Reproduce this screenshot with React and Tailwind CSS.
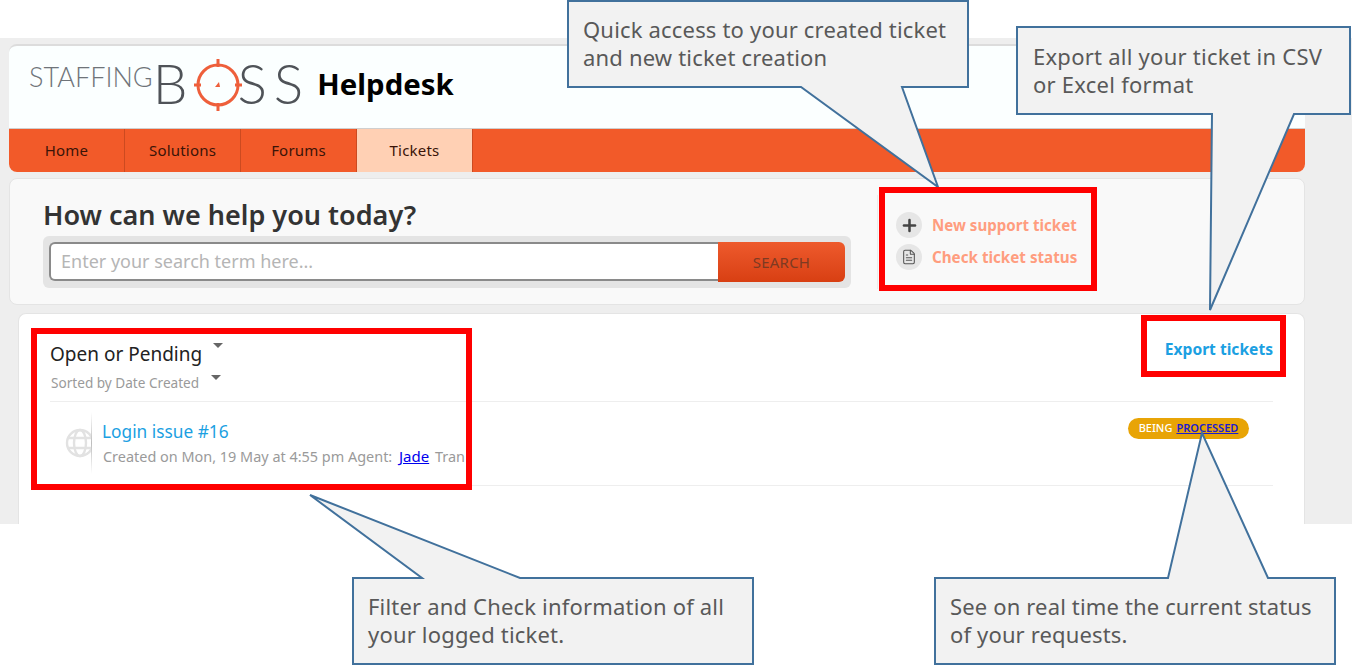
import { Plus, FileText } from 'lucide-react';

const navItems = ['Home', 'Solutions', 'Forums', 'Tickets'];

const callouts = [
  { d: 'M568 1H968V87H902L938 187L801 87H568Z' },
  { d: 'M1017 27H1350V114H1294L1210 310L1212 114H1017Z' },
  { d: 'M353 578H422L310 495L520 578H753V664H353Z' },
  { d: 'M935 578H1168L1202 433L1268 578H1335V664H935Z' },
];

const Caret = () => (
  <span className="block w-0 h-0 border-x-[5px] border-x-transparent border-t-[5px] border-t-[#666]" />
);

const TargetLogo = () => (
  <svg width="56" height="56" viewBox="0 0 56 56" className="shrink-0">
    <circle cx="28" cy="28" r="20" fill="none" stroke="#ee5f3b" strokeWidth="3" />
    <path d="M28 2v8M28 46v8M4 28h7M45 28h7" stroke="#ee5f3b" strokeWidth="3" />
    <path d="M25 30l4-5 1 5z" fill="#ee5f3b" />
  </svg>
);

const Globe = () => (
  <svg width="28" height="30" viewBox="0 0 28 30" fill="none" stroke="#e2e2e2" strokeWidth="2.4" className="shrink-0">
    <circle cx="15" cy="15" r="13" />
    <ellipse cx="15" cy="15" rx="6" ry="13" />
    <path d="M2 10h26M2 20h26" />
  </svg>
);

export default function App() {
  return (
    <div className="relative w-[1352px] h-[665px] bg-white overflow-hidden font-['Noto_Sans',sans-serif]">
      <div className="mt-[38px] h-[486px] w-full absolute top-0 left-0 bg-[#eeeeee]" />

      <div className="relative pt-[44px] pl-[9px] w-[1305px] flex flex-col">
        {/* Header */}
        <div className="h-[128px] rounded-lg border-t-2 border-[#dcdcdc] bg-[#fbffff] flex flex-col">
          <div className="h-[82px] flex items-start pl-[20px]">
            <span className="font-['Lato',sans-serif] font-light text-[27px] leading-none text-[#6f7479] mt-[17px]">STAFFING</span>
            <span className="font-['Lato',sans-serif] font-light text-[55px] leading-none text-[#4f5358] mt-[10px]">B</span>
            <span className="ml-[3px] mt-[11px]"><TargetLogo /></span>
            <span className="font-['Lato',sans-serif] font-light text-[55px] leading-none text-[#4f5358] tracking-[7px] mt-[10px] -ml-[9px]">SS</span>
            <span className="font-bold text-[29.4px] leading-none text-black ml-[7px] mt-[24px]">Helpdesk</span>
          </div>
          <div className="h-[44px] bg-[#f25a29] rounded-b-lg border-t border-[#cfcfcf] flex">
            {navItems.map((item) => (
              <div
                key={item}
                className={`w-[116px] flex items-center justify-center text-[15px] tracking-[0.2px] pb-[1px] border-r border-[#cc4a20] text-[#3a1408] ${item === 'Tickets' ? 'bg-[#ffd0b4]' : ''}`}
              >
                {item}
              </div>
            ))}
          </div>
        </div>

        {/* Search */}
        <div className="mt-[6px] h-[127px] bg-[#f9f9f9] rounded-lg border border-[#e4e4e4] flex">
          <div className="pl-[33px] pt-[18px] w-[867px]">
            <h1 className="font-semibold text-[27px] leading-[36px] text-[#333]">How can we help you today?</h1>
            <div className="mt-[3px] w-[808px] h-[52px] bg-[#e4e4e4] rounded-md p-[6px] flex">
              <div className="w-[669px] h-[39px] bg-white border-2 border-r-0 border-[#8a8a8a] rounded-l-md flex items-center pl-[10px] text-[18px] text-[#b5b5b5]">
                Enter your search term here...
              </div>
              <div className="w-[127px] h-[40px] rounded-r-md bg-gradient-to-b from-[#ee5a2c] to-[#d83f12] flex items-center justify-center text-[15px] tracking-[0.2px] text-[#7d3a22]">
                SEARCH
              </div>
            </div>
          </div>
          <div className="mt-[16px] h-[94px] border-l border-[#ececec] pl-[18px] pt-[17px] flex flex-col gap-[6px]">
            <div className="flex items-center gap-[10px] h-[26px]">
              <span className="w-[26px] h-[26px] rounded-full bg-[#e6e6e6] flex items-center justify-center">
                <Plus size={19} strokeWidth={3.2} className="text-[#444]" />
              </span>
              <span className="font-bold text-[15.1px] text-[#ff9d7f]">New support ticket</span>
            </div>
            <div className="flex items-center gap-[10px] h-[26px]">
              <span className="w-[26px] h-[26px] rounded-full bg-[#e6e6e6] flex items-center justify-center">
                <FileText size={16} strokeWidth={1.6} className="text-[#555]" />
              </span>
              <span className="font-bold text-[15.2px] text-[#ff9d7f]">Check ticket status</span>
            </div>
          </div>
        </div>

        {/* Tickets */}
        <div className="mt-[8px] ml-[9px] h-[211px] bg-white rounded-t-lg border-t border-x border-[#e4e4e4] px-[31px] flex flex-col">
          <div className="h-[88px] border-b border-[#eeeeee] flex justify-between">
            <div className="pt-[26px]">
              <div className="flex items-start gap-[11px]">
                <span className="text-[19px] leading-[28px] text-[#222]">Open or Pending</span>
                <span className="mt-[3px]"><Caret /></span>
              </div>
              <div className="flex items-start gap-[12px] mt-[6px] pl-[1px]">
                <span className="text-[13.6px] leading-[18px] text-[#9a9a9a]">Sorted by Date Created</span>
                <span className="mt-[1px]"><Caret /></span>
              </div>
            </div>
            <span className="font-bold text-[15.6px] leading-5 text-[#1ba0e2] pt-[25px]">Export tickets</span>
          </div>
          <div className="h-[84px] border-b border-[#eeeeee] flex items-center justify-between pb-[2px]">
            <div className="flex items-center">
              <div className="w-[41px] h-[62px] flex items-center justify-end overflow-hidden">
                <span className="-mr-[2px]"><Globe /></span>
              </div>
              <div className="w-px h-[62px] bg-gradient-to-b from-transparent via-[#bdbdbd] to-transparent" />
              <div className="pl-[10px] pt-[1px]">
                <div className="text-[17.3px] leading-[24px] text-[#1ba0e2]">Login issue #16</div>
                <div className="text-[14.45px] leading-5 mt-[2px] pl-[1px] text-[#9a9a9a] whitespace-nowrap">
                  Created on Mon, 19 May at 4:55 pm Agent: <a href="#" className="text-[#0000ee] underline text-[15px] ml-[3px] mr-[2px]">Jade</a> Tran
                </div>
              </div>
            </div>
            <div className="mr-[24px] mb-[28px] w-[121px] h-[21px] rounded-full bg-[#e8a406] flex items-center justify-center gap-1 text-[11px]">
              <span className="text-white font-medium">BEING</span>
              <a href="#" className="text-[#1c1ccf] font-semibold underline">PROCESSED</a>
            </div>
          </div>
        </div>
      </div>

      {/* Annotation overlay */}
      <svg className="absolute top-0 left-0 pointer-events-none" width="1352" height="665" viewBox="0 0 1352 665">
        {callouts.map((c) => (
          <path key={c.d} d={c.d} fill="#f2f2f2" stroke="#41719c" strokeWidth="2" />
        ))}
      </svg>
      <div className="absolute left-[583px] top-[15px] text-[22px] leading-[28px] tracking-[0.18px] text-[#595959] whitespace-nowrap">
        Quick access to your created ticket<br />and new ticket creation
      </div>
      <div className="absolute left-[1033px] top-[42px] text-[22px] leading-[28px] tracking-[0.25px] text-[#595959] whitespace-nowrap">
        Export all your ticket in CSV<br />or Excel format
      </div>
      <div className="absolute left-[368px] top-[592px] text-[22px] leading-[28px] tracking-[0.18px] text-[#595959] whitespace-nowrap">
        Filter and Check information of all<br />your logged ticket.
      </div>
      <div className="absolute left-[950px] top-[592px] text-[22px] leading-[28px] tracking-[0.15px] text-[#595959] whitespace-nowrap">
        See on real time the current status<br />of your requests.
      </div>

      <div className="absolute left-[879px] top-[187px] w-[218px] h-[104px] border-[6px] border-[#ff0000]" />
      <div className="absolute left-[31px] top-[328px] w-[441px] h-[162px] border-[6px] border-[#ff0000]" />
      <div className="absolute left-[1141px] top-[315px] w-[145px] h-[62px] border-[6px] border-[#ff0000]" />
    </div>
  );
}
